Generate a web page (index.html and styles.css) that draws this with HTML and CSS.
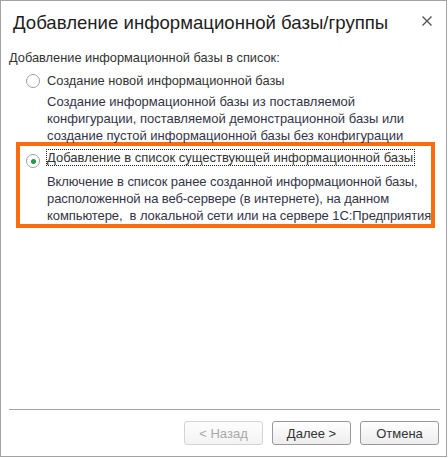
FILE: index.html
```html
<!DOCTYPE html>
<html lang="ru">
<head>
<meta charset="utf-8">
<link rel="stylesheet" href="styles.css">
</head>
<body>
<div class="dialog">
  <div class="header">
    <div class="title">Добавление информационной базы/группы</div>
    <svg class="close" width="10" height="10" viewBox="0 0 10 10"><path d="M0.5 0.5 L9.5 9.5 M9.5 0.5 L0.5 9.5" stroke="#555" stroke-width="1.4" fill="none"/></svg>
  </div>
  <div class="content">
    <div class="subhead">Добавление информационной базы в список:</div>
    <div class="option first">
      <div class="row"><span class="radio"></span><span class="label">Создание новой информационной базы</span></div>
      <div class="desc">Создание информационной базы из поставляемой<br>конфигурации, поставляемой демонстрационной базы или<br>создание пустой информационной базы без конфигурации</div>
    </div>
    <div class="option highlight">
      <div class="row"><span class="radio checked"></span><span class="label focus">Добавление в список существующей информационной базы</span></div>
      <div class="desc">Включение в список ранее созданной информационной базы,<br>расположенной на веб-сервере (в интернете), на данном<br>компьютере,&nbsp; в локальной сети или на сервере 1С:Предприятия</div>
    </div>
  </div>
  <div class="footer">
    <button class="btn disabled">&lt; Назад</button>
    <button class="btn">Далее &gt;</button>
    <button class="btn">Отмена</button>
  </div>
</div>
</body>
</html>
```
FILE: styles.css
```css
* { box-sizing: border-box; }
html, body { margin: 0; padding: 0; background: #fff; }
body { font-family: "Liberation Sans", Arial, sans-serif; font-size: 13px; color: #333; }
.dialog {
  width: 447px;
  height: 457px;
  border: 1px solid #a3a3a3;
  display: flex;
  flex-direction: column;
  background: #fff;
}
.header {
  display: flex;
  justify-content: space-between;
  align-items: flex-start;
  padding: 12px 14px 0 12px;
}
.title { font-size: 18.6px; line-height: 20px; color: #1e1e1e; white-space: nowrap; }
.close { margin-top: 3px; }
.content { flex: 1; padding: 16px 11px 0 8px; }
.subhead { line-height: 17px; font-size: 12.8px; }
.option.first { margin-top: 6px; padding-left: 17px; }
.row { display: flex; align-items: flex-start; }
.radio {
  width: 14px; height: 14px;
  border: 1px solid #a0a0a0;
  border-radius: 50%;
  background: #fff;
  flex: none;
  margin-top: 2px;
  margin-right: 7px;
  display: flex; align-items: center; justify-content: center;
}
.radio.checked { margin-top: 5px; margin-right: 6px; }
.radio.checked::after {
  content: "";
  width: 5px; height: 5px; border-radius: 50%;
  background: #1f9a4c;
}
.label { line-height: 17px; white-space: nowrap; }
.option.first .label { font-size: 12.8px; }
.label.focus { line-height: 15px; border: 1px dotted #222; padding: 0 1px 0 0; }
.desc { line-height: 17px; margin-top: 4px; padding-left: 21px; font-size: 13px; white-space: nowrap; color: #343446; }
.option.highlight .desc { letter-spacing: -0.08px; }
.option.highlight {
  margin: -2px 0 0 7px;
  border: 4px solid #fc6c0c;
  padding: 3px 0 0 6px;
}
.option.highlight .desc { margin-top: 5px; }
.footer {
  margin: 0 6px 0 8px;
  border-top: 1px solid #a3a3a3;
  padding: 11px 1px 11px 0;
  display: flex;
  justify-content: flex-end;
  gap: 9px;
}
.btn {
  width: 79px; height: 24px;
  font-family: "Liberation Sans", Arial, sans-serif;
  font-size: 13px;
  color: #333;
  border: 1px solid #999;
  border-radius: 3px;
  background: linear-gradient(#ffffff, #ededed);
  padding: 0;
}
.btn.disabled { color: #a9a9a9; border-color: #d4d4d4; background: linear-gradient(#fdfdfd, #f3f3f3); }
```
